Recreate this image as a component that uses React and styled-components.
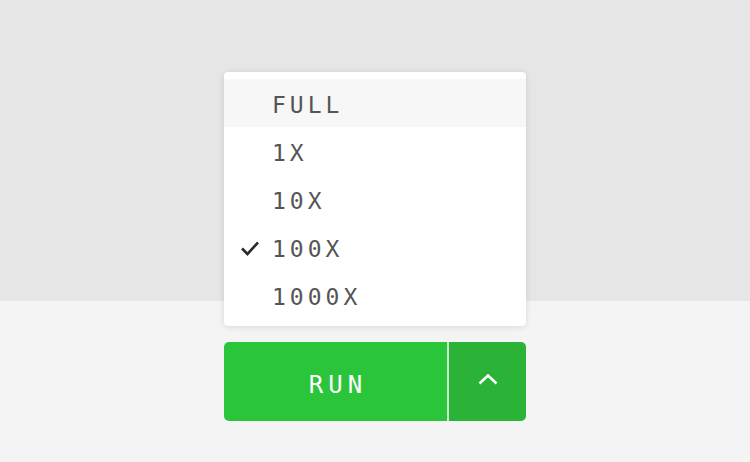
import React, { useState } from 'react';
import styled, { createGlobalStyle } from 'styled-components';

const GlobalStyle = createGlobalStyle`
  html, body {
    margin: 0;
    padding: 0;
    background: #f4f4f4;
  }
  body {
    font-family: "DejaVu Sans Mono", "Liberation Mono", monospace;
  }
`;

const OPTIONS = ['FULL', '1X', '10X', '100X', '1000X'];

export default function App() {
  const [selected] = useState('100X');
  const [hovered] = useState('FULL');

  return (
    <>
      <GlobalStyle />
      <Page>
        <TopArea />
        <BottomArea />
        <Stack>
          <Menu>
            {OPTIONS.map((opt) => (
              <MenuItem key={opt} $hover={opt === hovered}>
                <CheckSlot>
                  {opt === selected && (
                    <svg width="20" height="16" viewBox="0 0 20 16">
                      <path
                        d="M2 8.5 L7.5 14 L18 2.5"
                        fill="none"
                        stroke="#2b2b2b"
                        strokeWidth="2.6"
                      />
                    </svg>
                  )}
                </CheckSlot>
                <Label>{opt}</Label>
              </MenuItem>
            ))}
          </Menu>
          <ButtonGroup>
            <RunButton>RUN</RunButton>
            <Divider />
            <ToggleButton>
              <svg width="22" height="14" viewBox="0 0 22 14">
                <path
                  d="M2.5 11.5 L11 3.5 L19.5 11.5"
                  fill="none"
                  stroke="#fff"
                  strokeWidth="2.6"
                />
              </svg>
            </ToggleButton>
          </ButtonGroup>
        </Stack>
      </Page>
    </>
  );
}

const Page = styled.div`
  position: relative;
  width: 750px;
  height: 462px;
  display: grid;
  grid-template-rows: 301px 1fr;
`;

const TopArea = styled.div`
  background: #e6e6e6;
`;

const BottomArea = styled.div`
  background: #f4f4f4;
`;

// the menu + button float over both halves of the background
const Stack = styled.div`
  position: absolute;
  left: 224px;
  top: 72px;
  width: 302px;
  display: flex;
  flex-direction: column;
  gap: 16px;
`;

const Menu = styled.div`
  background: #fff;
  border-radius: 4px;
  padding: 7px 0;
  box-shadow: 0 1px 6px rgba(0, 0, 0, 0.12);
`;

const MenuItem = styled.div`
  height: 48px;
  display: flex;
  align-items: center;
  background: ${(p) => (p.$hover ? '#f7f7f7' : 'transparent')};
`;

const CheckSlot = styled.div`
  width: 48px;
  display: flex;
  justify-content: flex-end;
  padding-right: 12px;
  box-sizing: border-box;
  margin-top: 2px;
`;

const Label = styled.span`
  font-family: "DejaVu Sans Mono", "Liberation Mono", monospace;
  font-size: 23px;
  letter-spacing: 4px;
  color: #555;
  line-height: 1;
  padding-top: 5px;
`;

const ButtonGroup = styled.div`
  display: flex;
  height: 79px;
  border-radius: 5px;
  overflow: hidden;
`;

const RunButton = styled.button`
  flex: 1;
  border: none;
  background: #2ac53a;
  color: #fff;
  font-family: "DejaVu Sans Mono", "Liberation Mono", monospace;
  font-size: 24px;
  letter-spacing: 5px;
  padding: 6px 0 0 5px;
  cursor: pointer;
`;

const Divider = styled.div`
  width: 2px;
  background: #c9efcd;
`;

const ToggleButton = styled.button`
  width: 77px;
  border: none;
  background: #2bb338;
  display: flex;
  align-items: center;
  justify-content: center;
  padding: 0 0 6px 0;
  cursor: pointer;
`;
